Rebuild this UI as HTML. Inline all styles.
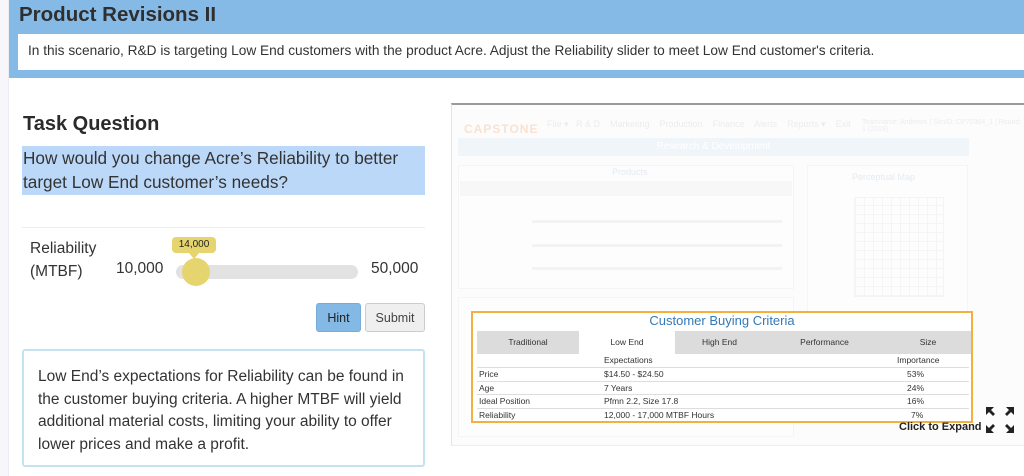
<!DOCTYPE html>
<html><head><meta charset="utf-8"><style>
*{box-sizing:border-box;margin:0;padding:0}
body{width:1024px;height:476px;overflow:hidden;background:#fff;font-family:"Liberation Sans",Arial,sans-serif;color:#333;position:relative}
.a{position:absolute}
.gut{left:0;top:0;width:9px;height:476px;background:#f7f7fb;border-right:1px solid #ececf2}
.hdr{left:9px;top:0;width:1015px;height:78px;background:#86bae6}
.hdr h1{position:absolute;left:10px;top:3px;font-size:20.5px;font-weight:bold;color:#2f2f2f}
.intro{left:18px;top:34px;width:1006px;height:36px;background:#fff;font-size:13.7px;padding:9px 0 0 10px;color:#333}
.tq{left:23px;top:113px;font-size:20px;font-weight:bold;color:#2b2b2b}
.q{left:22px;top:146px;width:403px;height:49px;background:#bcd8f8;font-size:17.2px;line-height:24px;padding:0 0 0 1px;color:#333}
.hr{left:22px;top:227px;width:403px;height:1px;background:#eee}
.lab{left:30px;top:237px;font-size:15.5px;line-height:23px}
.num{font-size:15.5px}
.track{left:176px;top:265px;width:182px;height:14px;border-radius:7px;background:#e2e2e2}
.thumb{left:182px;top:258px;width:28px;height:28px;border-radius:50%;background:#e6d46e}
.tip{left:172px;top:237px;width:44px;height:16px;border-radius:4px;background:#e6d46e;font-size:10px;text-align:center;line-height:16px;color:#222}
.tipa{left:189px;top:253px;width:0;height:0;border-left:5px solid transparent;border-right:5px solid transparent;border-top:6px solid #e6d46e}
.btn{top:303px;height:29px;border-radius:3px;font-size:12.5px;text-align:center;line-height:29px}
.hint{left:22px;top:349px;width:403px;height:118px;border:2px solid #c4e3ee;border-radius:3px;padding:15px 0 0 14px;font-size:15.5px;line-height:22.5px;color:#333}
.shot{left:451px;top:103px;width:573px;height:343px;border-top:2px solid #9a9a9a;border-left:1px solid #e4e4e4;border-bottom:1px solid #eee;background:#fcfcfd}
.f{color:#ececf0;font-size:9px}
.cbc{left:471px;top:311px;width:502px;height:112px;border:2px solid #f2b13c;background:#fff}
.cbc .t{position:absolute;left:0;width:100%;top:0;text-align:center;color:#3279b7;font-size:13px}
.tab{position:absolute;top:18px;height:23px;background:#dcdcdc;font-size:8.5px;text-align:center;line-height:23px;color:#333}
.row{position:absolute;left:4px;width:492px;height:13.5px;border-top:1px solid #ddd;font-size:8.5px;line-height:12.5px;color:#333}
.row span{position:absolute}
</style></head><body>
<div class="a gut"></div>
<div class="a hdr"><h1>Product Revisions II</h1></div>
<div class="a intro">In this scenario, R&amp;D is targeting Low End customers with the product Acre. Adjust the Reliability slider to meet Low End customer's criteria.</div>

<div class="a tq">Task Question</div>
<div class="a q">How would you change Acre’s Reliability to better target Low End customer’s needs?</div>
<div class="a hr"></div>
<div class="a lab">Reliability<br>(MTBF)</div>
<div class="a num" style="left:116px;top:260px">10,000</div>
<div class="a num" style="left:371px;top:260px">50,000</div>
<div class="a track"></div>
<div class="a thumb"></div>
<div class="a tip">14,000</div>
<div class="a tipa"></div>
<div class="a btn" style="left:316px;width:45px;background:#83b9e4;border:1px solid #76acd9;color:#222">Hint</div>
<div class="a btn" style="left:365px;width:60px;background:#efefef;border:1px solid #ccc;color:#444">Submit</div>
<div class="a hint">Low End’s expectations for Reliability can be found in the customer buying criteria. A higher MTBF will yield additional material costs, limiting your ability to offer lower prices and make a profit.</div>

<div class="a shot">
  <div class="a" style="left:12px;top:17px;color:#f9e2d0;font-weight:bold;font-size:12px;letter-spacing:1px">CAPSTONE</div>
  <div class="a f" style="left:95px;top:14px">File ▾ &nbsp; R &amp; D &nbsp;&nbsp; Marketing &nbsp;&nbsp; Production &nbsp;&nbsp; Finance &nbsp;&nbsp; Alerts &nbsp;&nbsp; Reports ▾ &nbsp;&nbsp; Exit</div>
  <div class="a f" style="left:410px;top:14px;font-size:7px">Teamname: Andrews | SimID: CP70364_1 | Round: 1 (2019)</div>
  <div class="a" style="left:6px;top:33px;width:511px;height:18px;background:#f0f5fa;color:#fff;text-align:center;font-size:10px;line-height:18px">Research &amp; Development</div>
  <div class="a" style="left:6px;top:60px;width:336px;height:124px;background:#fdfdfd;border:1px solid #f5f5f5"></div>
  <div class="a f" style="left:160px;top:62px;color:#e3eaf2">Products</div>
  <div class="a" style="left:8px;top:76px;width:332px;height:15px;background:#f7f7f7"></div>
  <div class="a" style="left:80px;top:115px;width:250px;height:3px;background:#f3f3f3"></div>
  <div class="a" style="left:80px;top:139px;width:250px;height:3px;background:#f3f3f3"></div>
  <div class="a" style="left:80px;top:162px;width:250px;height:3px;background:#f3f3f3"></div>
  <div class="a" style="left:355px;top:60px;width:161px;height:255px;background:#fdfdfd;border:1px solid #f5f5f5"></div>
  <div class="a f" style="left:400px;top:67px;color:#e3eaf2">Perceptual Map</div>
  <div class="a" style="left:402px;top:92px;width:90px;height:100px;border:1px solid #f4f4f4;background:repeating-linear-gradient(90deg,#f5f5f5 0 1px,transparent 1px 9px),repeating-linear-gradient(0deg,#f5f5f5 0 1px,transparent 1px 9px)"></div>
  <div class="a" style="left:6px;top:192px;width:336px;height:140px;background:#fdfdfd;border:1px solid #f5f5f5"></div>
</div>

<div class="a cbc">
  <div class="t">Customer Buying Criteria</div>
  <div class="tab" style="left:4px;width:102px">Traditional</div>
  <div class="tab" style="left:106px;width:96px;background:#fff">Low End</div>
  <div class="tab" style="left:202px;width:89px">High End</div>
  <div class="tab" style="left:291px;width:121px">Performance</div>
  <div class="tab" style="left:412px;width:86px">Size</div>
  <div class="row" style="top:41px;border-top:none"><span style="left:127px">Expectations</span><span style="left:420px">Importance</span></div>
  <div class="row" style="top:54px"><span style="left:2px">Price</span><span style="left:127px">$14.50 - $24.50</span><span style="left:430px">53%</span></div>
  <div class="row" style="top:67.5px"><span style="left:2px">Age</span><span style="left:127px">7 Years</span><span style="left:430px">24%</span></div>
  <div class="row" style="top:81px"><span style="left:2px">Ideal Position</span><span style="left:127px">Pfmn 2.2, Size 17.8</span><span style="left:430px">16%</span></div>
  <div class="row" style="top:94.5px"><span style="left:2px">Reliability</span><span style="left:127px">12,000 - 17,000 MTBF Hours</span><span style="left:434px">7%</span></div>
</div>

<div class="a" style="left:899px;top:421px;font-size:11px;font-weight:bold;color:#222">Click to Expand</div>
<svg class="a" style="left:984px;top:405px" width="32" height="30" viewBox="0 0 32 30" fill="#222">
<path d="M2 2h8l-3 3 4 4-2 2-4-4-3 3z"/>
<path d="M30 2h-8l3 3-4 4 2 2 4-4 3 3z"/>
<path d="M2 28h8l-3-3 4-4-2-2-4 4-3-3z"/>
<path d="M30 28h-8l3-3-4-4 2-2 4 4 3-3z"/>
</svg>
</body></html>
